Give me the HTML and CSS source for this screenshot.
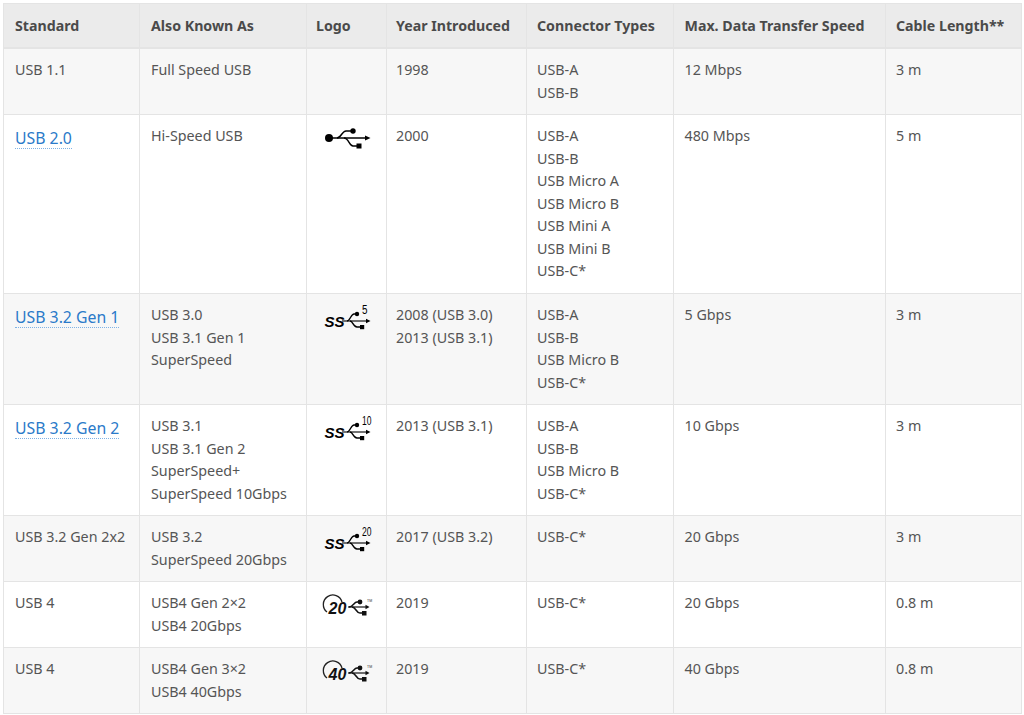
FILE: index.html
```html
<!DOCTYPE html>
<html lang="en">
<head>
<meta charset="utf-8">
<title>USB Standards</title>
<link rel="stylesheet" href="styles.css">
</head>
<body>
<svg class="defs" width="0" height="0" aria-hidden="true">
  <symbol id="ss-trident" viewBox="0 0 46 28">
    <path d="M17 17H41.500" fill="none" stroke="#000" stroke-width="1.100"/>
    <path d="M45.500 17l-4.500-2.200v4.400z" fill="#000"/>
    <path d="M22 17C25 17 26 10 29 10H32" fill="none" stroke="#000" stroke-width="1.400"/>
    <path d="M25 17C28 17 28 23 32 23H36" fill="none" stroke="#000" stroke-width="1.400"/>
    <circle cx="32" cy="10" r="2.200" fill="#000"/>
    <rect x="35" y="21" width="4.200" height="4.200" fill="#000"/>
  </symbol>
  <symbol id="c-trident" viewBox="0 0 54 28">
    <path d="M27 15H45" fill="none" stroke="#111" stroke-width="1.200"/>
    <path d="M48.500 15l-4-2.200v4.400z" fill="#111"/>
    <path d="M28 15C32 15 33 10 36 10H39" fill="none" stroke="#111" stroke-width="1.500"/>
    <path d="M31 15C35 15 35 21 39 21H42" fill="none" stroke="#111" stroke-width="1.500"/>
    <circle cx="39" cy="10" r="2.400" fill="#111"/>
    <rect x="41" y="19" width="4.500" height="4.500" fill="#111"/>
  </symbol>
</svg>
<table class="usb">
  <colgroup>
    <col class="c1"><col class="c2"><col class="c3"><col class="c4"><col class="c5"><col class="c6"><col class="c7">
  </colgroup>
  <thead>
    <tr><th>Standard</th><th>Also Known As</th><th>Logo</th><th>Year Introduced</th><th>Connector Types</th><th>Max. Data Transfer Speed</th><th>Cable Length**</th></tr>
  </thead>
  <tbody>
    <tr>
      <td>USB 1.1</td><td>Full Speed USB</td><td></td><td>1998</td>
      <td>USB-A<br>USB-B</td><td>12 Mbps</td><td>3 m</td>
    </tr>
    <tr>
      <td><a class="std" href="#">USB 2.0</a></td><td>Hi-Speed USB</td>
      <td><svg class="logo logo-usb" width="46" height="22" viewBox="0 0 46 22">
        <circle cx="4" cy="10" r="4" fill="#000"/>
        <path d="M4 10H41" fill="none" stroke="#000" stroke-width="1.300"/>
        <path d="M45.500 10l-5.500-2.500v5z" fill="#000"/>
        <path d="M12 10C16 10 17 3 21 3H28" fill="none" stroke="#000" stroke-width="1.400"/>
        <path d="M19 10C24 10 24 18 28 18H33" fill="none" stroke="#000" stroke-width="1.400"/>
        <circle cx="28" cy="3" r="2.700" fill="#000"/>
        <rect x="31.500" y="15.500" width="5" height="5" fill="#000"/>
      </svg></td>
      <td>2000</td>
      <td>USB-A<br>USB-B<br>USB Micro A<br>USB Micro B<br>USB Mini A<br>USB Mini B<br>USB-C*</td><td>480 Mbps</td><td>5 m</td>
    </tr>
    <tr>
      <td><a class="std" href="#">USB 3.2 Gen 1</a></td><td>USB 3.0<br>USB 3.1 Gen 1<br>SuperSpeed</td>
      <td><svg class="logo" width="48" height="28" viewBox="0 0 48 28"><use href="#ss-trident" width="46" height="28"/><text class="ss" x="-0.500" y="23">SS</text><text class="num" x="37" y="10" textLength="5.500" lengthAdjust="spacingAndGlyphs">5</text></svg></td>
      <td>2008 (USB 3.0)<br>2013 (USB 3.1)</td>
      <td>USB-A<br>USB-B<br>USB Micro B<br>USB-C*</td><td>5 Gbps</td><td>3 m</td>
    </tr>
    <tr>
      <td><a class="std" href="#">USB 3.2 Gen 2</a></td><td>USB 3.1<br>USB 3.1 Gen 2<br>SuperSpeed+<br>SuperSpeed 10Gbps</td>
      <td><svg class="logo" width="48" height="28" viewBox="0 0 48 28"><use href="#ss-trident" width="46" height="28"/><text class="ss" x="-0.500" y="23">SS</text><text class="num" x="37" y="10" textLength="9.500" lengthAdjust="spacingAndGlyphs">10</text></svg></td>
      <td>2013 (USB 3.1)</td>
      <td>USB-A<br>USB-B<br>USB Micro B<br>USB-C*</td><td>10 Gbps</td><td>3 m</td>
    </tr>
    <tr>
      <td>USB 3.2 Gen 2x2</td><td>USB 3.2<br>SuperSpeed 20Gbps</td>
      <td><svg class="logo" width="48" height="28" viewBox="0 0 48 28"><use href="#ss-trident" width="46" height="28"/><text class="ss" x="-0.500" y="23">SS</text><text class="num" x="37" y="10" textLength="9.500" lengthAdjust="spacingAndGlyphs">20</text></svg></td>
      <td>2017 (USB 3.2)</td>
      <td>USB-C*</td><td>20 Gbps</td><td>3 m</td>
    </tr>
    <tr>
      <td>USB 4</td><td>USB4 Gen 2×2<br>USB4 20Gbps</td>
      <td><svg class="logo logo-wide" width="54" height="28" viewBox="0 0 54 28"><path class="arc" d="M6 20A9.500 9.500 0 1 1 21 10"/><use href="#c-trident" width="54" height="28"/><text class="ring" x="7.500" y="22">20</text><text class="tm" x="46" y="10">TM</text></svg></td>
      <td>2019</td>
      <td>USB-C*</td><td>20 Gbps</td><td>0.8 m</td>
    </tr>
    <tr>
      <td>USB 4</td><td>USB4 Gen 3×2<br>USB4 40Gbps</td>
      <td><svg class="logo logo-wide" width="54" height="28" viewBox="0 0 54 28"><path class="arc" d="M6 20A9.500 9.500 0 1 1 21 10"/><use href="#c-trident" width="54" height="28"/><text class="ring" x="7.500" y="22">40</text><text class="tm" x="46" y="10">TM</text></svg></td>
      <td>2019</td>
      <td>USB-C*</td><td>40 Gbps</td><td>0.8 m</td>
    </tr>
  </tbody>
</table>
</body>
</html>
```
FILE: styles.css
```css
html, body { background: #fff; }
body {
  margin: 0;
  padding: 3px 3px 0;
  font-family: "Noto Sans", "Liberation Sans", sans-serif;
  color: #555;
}
.defs { position: absolute; }
.usb {
  border-collapse: collapse;
  table-layout: fixed;
  width: 1018px;
  font-size: 14.3px;
  line-height: 22.5px;
}
.c1 { width: 136px; }
.c2 { width: 167px; }
.c3 { width: 80px; }
.c4 { width: 140px; }
.c5 { width: 147px; }
.c6 { width: 212px; }
.c7 { width: 136px; }
.usb th, .usb td {
  border: 1px solid #e4e4e4;
  padding: 10px 11px;
  text-align: left;
  vertical-align: top;
}
.usb th {
  background: #ebebeb;
  border-bottom-width: 2px;
  padding: 11px 11px 9.5px;
  font-size: 14.2px;
  font-weight: 700;
  color: #4a4a4a;
}
.usb th:nth-child(3), .usb th:nth-child(4), .usb td:nth-child(3), .usb td:nth-child(4) {
  padding-left: 9px;
}
.usb th:nth-child(5), .usb td:nth-child(5), .usb th:nth-child(7), .usb td:nth-child(7) {
  padding-left: 10px;
}
.usb th:nth-child(6), .usb td:nth-child(6) { padding-left: 10.5px; }
.usb tbody tr:nth-child(2) td { padding-bottom: 10.5px; }
.usb tbody tr:nth-child(odd) td { background: #f7f7f7; }
.std {
  display: inline-block;
  margin-top: 3px;
  font-size: 15.8px;
  line-height: 20px;
  color: #2a7ac9;
  text-decoration: none;
  border-bottom: 1px dotted #7fb2e5;
}
.logo { display: block; margin: 0 0 0 9px; overflow: visible; }
.logo-usb { margin-top: 3px; }
.logo-wide { margin-left: 5px; }
.ss { font: italic 700 15px "Liberation Sans", sans-serif; fill: #000; }
.num { font: 12px "Liberation Sans", sans-serif; fill: #000; }
.ring { font: italic 700 16px "Liberation Sans", sans-serif; fill: #111; }
.tm { font: 3.5px "Liberation Sans", sans-serif; fill: #333; }
.arc { fill: none; stroke: #222; stroke-width: 1.3; }
```
